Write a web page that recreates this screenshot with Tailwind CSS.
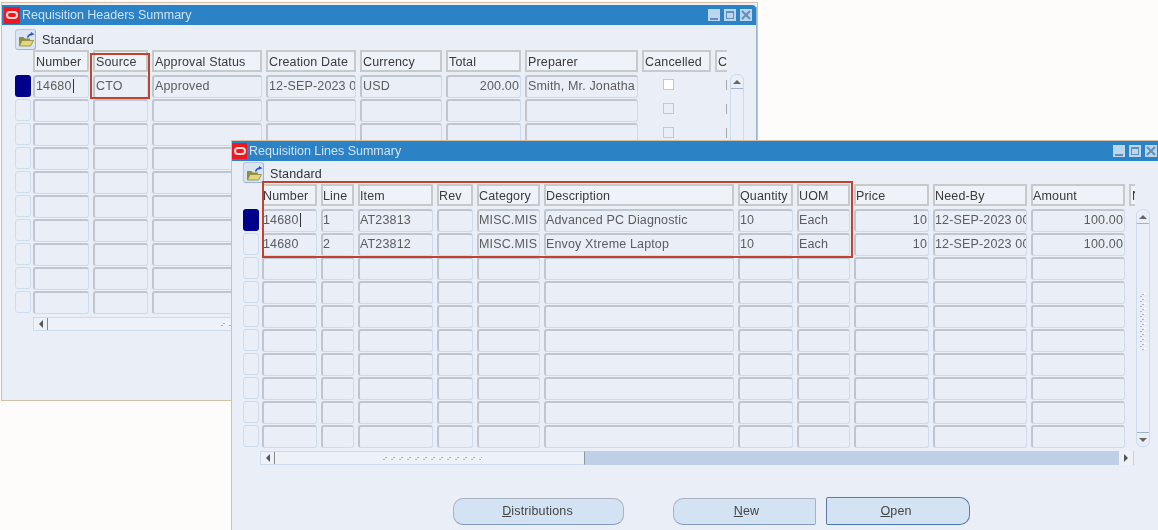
<!DOCTYPE html>
<html lang="en">
<head>
<meta charset="UTF-8" />
<title>Requisition Summary</title>
<script src="https://cdn.jsdelivr.net/npm/@tailwindcss/browser@4"></script>
</head>
<body class="bg-[#fdfcfa] h-[530px] w-[1158px] overflow-hidden relative font-['Liberation_Sans',Arial,sans-serif] text-[12.5px] tracking-[0.15px]">

<svg width="0" height="0" class="absolute">
  <defs>
    <pattern id="grip" width="8" height="5" patternUnits="userSpaceOnUse">
      <rect x="5" y="0" width="2" height="1" fill="#fff"/>
      <rect x="3" y="1" width="2" height="1" fill="#a9b5c7"/>
      <rect x="1" y="3" width="2" height="1" fill="#a9b5c7"/>
    </pattern>
    <g id="folder">
      <path d="M2 6h4.500l1 1.500h5.500v2H5.500L3 14.500H2z" fill="#8f8e40"/>
      <path d="M5 9.500h11.500l-3 5.500H2.500z" fill="#e2d77c" stroke="#8a8838" stroke-width="0.800"/>
      <path d="M10.500 6.500c1-2.500 2.500-3.500 4.500-3.200" fill="none" stroke="#2a52d0" stroke-width="1.400"/>
      <path d="M14 1l3.500 2.200-4 1.500z" fill="#2a52d0"/>
    </g>
  </defs>
</svg>

<!-- headers window -->
<section class="absolute left-[1px] top-[2px] w-[757px] h-[399px] bg-[#e9eef7] border border-[#d4bfa9] flex flex-col blur-[0.25px]">
  <div class="absolute right-0 top-[4px] bottom-0 w-[1px] bg-[#9db3d0]"></div>
  <div class="h-[20px] mt-[2px] mr-[1px] bg-[#2b83c5] flex items-center text-[#cfe2f2] tracking-normal shrink-0 rounded-tr-[4px]">
    <span class="w-[16px] h-[17px] ml-[2px] mr-[2px] bg-[#f01820] flex items-center justify-center"><span class="block w-[12px] h-[8px] border-2 border-[#ffd9d9] rounded-[4px]"></span></span>
    <span class="mt-[1px]">Requisition Headers Summary</span>
    <div class="ml-auto mr-[4px] flex gap-[4px]">
      <span class="w-[12px] h-[12px] bg-[#bcd6ec] flex items-end justify-center pb-[1px]"><span class="block w-[8px] h-[2px] bg-[#5f8fbc]"></span></span>
      <span class="w-[12px] h-[12px] bg-[#bcd6ec] flex items-center justify-center"><span class="block w-[8px] h-[8px] border border-t-2 border-[#5f8fbc]"></span></span>
      <span class="w-[12px] h-[12px] bg-[#bcd6ec] flex items-center justify-center text-[#5f8fbc]"><svg width="10" height="10" viewBox="0 0 10 10"><path d="M1 1l8 8M9 1l-8 8" stroke="currentColor" stroke-width="2"/></svg></span>
    </div>
  </div>
  <div class="h-[25px] pl-[13px] flex items-center gap-[6px] text-[#333] shrink-0">
    <span class="w-[21px] h-[21px] mt-[3px] bg-[#dbe5f2] border border-[#b6c8e0] border-r-[#9db3d0] border-b-[#9db3d0] rounded-[3px] flex items-center justify-center"><svg width="18" height="16" viewBox="0 0 18 16"><use href="#folder"/></svg></span>
    <span class="mt-[5px]">Standard</span>
  </div>
  <div class="flex pl-[13px]">
    <div id="hdr-grid" class="grid grid-cols-[18px_60px_59px_114px_94px_86px_79px_117px_73px_12px]"></div>
    <div class="ml-[3px] mt-[24px] w-[14px] h-[240px] border border-[#cddbee] rounded-t-[6px] flex flex-col items-center">
      <span class="w-full h-[14px] border-b border-[#9fb2cb] flex items-center justify-center"><span class="w-0 h-0 border-x-[4px] border-x-transparent border-b-[4px] border-b-[#666]"></span></span>
    </div>
  </div>
  <div class="ml-[31px] mt-[2px] w-[220px] h-[14px] bg-[#edf1f8] border border-[#cddbee] flex items-center">
    <span class="w-[14px] h-full border-r border-[#888] flex items-center justify-center"><span class="w-0 h-0 border-y-[4px] border-y-transparent border-r-[4px] border-r-[#555]"></span></span>
    <svg class="ml-auto" width="32" height="5"><rect width="32" height="5" fill="url(#grip)"/></svg>
  </div>
</section>

<!-- lines window -->
<section class="absolute left-[231px] top-[140px] w-[927px] h-[390px] bg-[#e9eef7] border-l border-t border-[#d4bfa9] flex flex-col blur-[0.25px]">
  <div class="h-[20px] bg-[#2b83c5] flex items-center text-[#cfe2f2] tracking-normal shrink-0">
    <span class="w-[15px] h-[16px] mr-[2px] bg-[#f01820] flex items-center justify-center"><span class="block w-[12px] h-[8px] border-2 border-[#ffd9d9] rounded-[4px]"></span></span>
    <span>Requisition Lines Summary</span>
    <div class="ml-auto mr-[1px] flex gap-[4px]">
      <span class="w-[12px] h-[12px] bg-[#bcd6ec] flex items-end justify-center pb-[1px]"><span class="block w-[8px] h-[2px] bg-[#5f8fbc]"></span></span>
      <span class="w-[12px] h-[12px] bg-[#bcd6ec] flex items-center justify-center"><span class="block w-[8px] h-[8px] border border-t-2 border-[#5f8fbc]"></span></span>
      <span class="w-[12px] h-[12px] bg-[#bcd6ec] flex items-center justify-center text-[#5f8fbc]"><svg width="10" height="10" viewBox="0 0 10 10"><path d="M1 1l8 8M9 1l-8 8" stroke="currentColor" stroke-width="2"/></svg></span>
    </div>
  </div>
  <div class="h-[23px] pl-[11px] flex items-center gap-[6px] text-[#333] shrink-0">
    <span class="w-[21px] h-[21px] bg-[#dbe5f2] border border-[#b6c8e0] border-r-[#9db3d0] border-b-[#9db3d0] rounded-[3px] flex items-center justify-center"><svg width="18" height="16" viewBox="0 0 18 16"><use href="#folder"/></svg></span>
    <span class="mt-[3px]">Standard</span>
  </div>
  <div class="flex pl-[11px]">
    <div id="line-grid" class="grid grid-cols-[19px_59px_37px_79px_40px_67px_194px_59px_57px_79px_98px_98px_6px]"></div>
    <div class="ml-[1px] mt-[25px] w-[14px] h-[238px] border border-[#cddbee] rounded-[6px] flex flex-col items-center">
      <span class="w-full h-[14px] border-b border-[#9fb2cb] flex items-center justify-center shrink-0"><span class="w-0 h-0 border-x-[4px] border-x-transparent border-b-[4px] border-b-[#666]"></span></span>
      <svg class="mt-[69px]" width="8" height="58"><rect width="8" height="58" fill="url(#grip)"/></svg>
      <span class="mt-auto w-full h-[14px] border-t border-[#9fb2cb] flex items-center justify-center shrink-0"><span class="w-0 h-0 border-x-[4px] border-x-transparent border-t-[4px] border-t-[#666]"></span></span>
    </div>
  </div>
  <div class="ml-[28px] mt-[2px] w-[874px] h-[14px] bg-[#bfcfe5] flex items-stretch">
    <div class="w-[325px] bg-[#edf1f8] border border-[#cddbee] border-r-[#8b95a3] flex items-center">
      <span class="w-[14px] h-full border-r border-[#888] flex items-center justify-center"><span class="w-0 h-0 border-y-[4px] border-y-transparent border-r-[4px] border-r-[#555]"></span></span>
      <svg class="ml-[107px]" width="100" height="5"><rect width="100" height="5" fill="url(#grip)"/></svg>
    </div>
    <span class="ml-auto mr-[1px] w-[14px] bg-[#edf1f8] flex items-center justify-center"><span class="w-0 h-0 border-y-[4px] border-y-transparent border-l-[4px] border-l-[#555]"></span></span>
  </div>
  <div class="flex items-center pl-[221px] mt-[32px] text-[#444]">
    <button class="w-[171px] h-[27px] bg-[#d3e3f4] border border-[#aab2bd] border-b-[#7f9cc0] rounded-[10px] pr-[2px]"><u>D</u>istributions</button>
    <button class="ml-[49px] w-[143px] h-[27px] bg-[#d3e3f4] border border-[#aab2bd] border-b-[#7f9cc0] rounded-l-[10px] rounded-r-[2px] pl-[4px]"><u>N</u>ew</button>
    <button class="ml-[10px] w-[144px] h-[28px] bg-[#d3e3f4] border-[1.5px] border-[#5f7aa0] border-b-[#4a76ad] rounded-l-[2px] rounded-r-[10px] pr-[4px]"><u>O</u>pen</button>
  </div>
</section>

<!-- red highlights -->
<div class="absolute left-[90px] top-[53px] w-[60px] h-[46px] border-2 border-[#c0432f]"></div>
<div class="absolute left-[262px] top-[181px] w-[591px] h-[77px] border-2 border-[#c0432f]"></div>

<script>
  const headCell = "h-[22px] mr-[4px] mb-[3px] border-2 border-[#c8caca] bg-[#eef2f9] px-[1px] leading-[20px] text-[#3a3a3a] overflow-hidden whitespace-nowrap";
  const fieldCell = "h-[23px] mr-[4px] mb-[1px] border-t-2 border-l-2 border-r border-b border-t-[#c0c6d0] border-l-[#c0c6d0] border-r-[#cddbee] border-b-[#cddbee] rounded-[3px] px-[1px] leading-[18px] text-[#5c5c5c] overflow-hidden whitespace-nowrap";
  const fieldRight = "h-[23px] mr-[4px] mb-[1px] border-t-2 border-l-2 border-r border-b border-t-[#c0c6d0] border-l-[#c0c6d0] border-r-[#cddbee] border-b-[#cddbee] rounded-[3px] px-[1px] leading-[18px] text-[#5c5c5c] overflow-hidden whitespace-nowrap text-right";
  const clipHead = "h-[22px] mb-[3px] border-2 border-r-0 border-[#c8caca] bg-[#eef2f9] px-[1px] leading-[20px] text-[#3a3a3a] overflow-hidden whitespace-nowrap";
  const selOn = "h-[22px] w-[16px] mb-[2px] bg-[#00008b] rounded-[3px]";
  const selOff = "h-[22px] w-[16px] mb-[2px] border border-[#cddbee] rounded-[3px]";

  function add(grid, cls, text) {
    const d = document.createElement("div");
    d.className = cls;
    if (text) d.textContent = text;
    grid.appendChild(d);
    return d;
  }

  function caret(cell) {
    cell.innerHTML = '<span class="border-r border-[#333] pr-[1px]">' + cell.textContent + '</span>';
  }

  // headers block
  const hdr = document.getElementById("hdr-grid");
  const hdrCols = ["Number","Source","Approval Status","Creation Date","Currency","Total","Preparer","Cancelled","C"];
  add(hdr, "");
  hdrCols.forEach((c, i) => add(hdr, i === 8 ? clipHead : headCell, c));
  const hdrRow = ["14680","CTO","Approved","12-SEP-2023 0","USD","200.00","Smith, Mr. Jonatha"];
  for (let r = 0; r < 10; r++) {
    add(hdr, r === 0 ? selOn : selOff);
    for (let c = 0; c < 7; c++) {
      const cell = add(hdr, c === 5 ? fieldRight : fieldCell, r === 0 ? hdrRow[c] : "");
      if (r === 0 && c === 0) caret(cell);
    }
    const box = add(hdr, "h-[24px] flex items-start justify-center pr-[20px] pt-[4px]");
    box.innerHTML = r === 0
      ? '<span class="block w-[11px] h-[11px] bg-white border border-[#c8c8c8]"></span>'
      : '<span class="block w-[11px] h-[11px] border border-[#c8c8c8]"></span>';
    const bar = add(hdr, "h-[24px] flex items-start justify-end pt-[5px]");
    bar.innerHTML = '<span class="block w-[1px] h-[10px] bg-[#aaa]"></span>';
  }

  // lines block, its text sits a pixel further left than in the headers block
  const lines = document.getElementById("line-grid");
  const lineCols = ["Number","Line","Item","Rev","Category","Description","Quantity","UOM","Price","Need-By","Amount","N"];
  const rightCols = [8, 10];
  const lineRows = [
    ["14680","1","AT23813","","MISC.MIS","Advanced PC Diagnostic","10","Each","10","12-SEP-2023 00","100.00"],
    ["14680","2","AT23812","","MISC.MIS","Envoy Xtreme Laptop","10","Each","10","12-SEP-2023 00","100.00"]
  ];
  add(lines, "");
  lineCols.forEach((c, i) => {
    const cls = i === 11 ? clipHead : i === 0 ? headCell + " indent-[-2px]" : headCell + " indent-[-1px]";
    add(lines, cls, c);
  });
  for (let r = 0; r < 10; r++) {
    add(lines, r === 0 ? selOn : selOff);
    for (let c = 0; c < 11; c++) {
      const text = lineRows[r] ? lineRows[r][c] : "";
      const cls = rightCols.includes(c) ? fieldRight : c === 0 ? fieldCell + " indent-[-2px]" : fieldCell + " indent-[-1px]";
      const cell = add(lines, cls, text);
      if (r === 0 && c === 0) caret(cell);
    }
    add(lines, "h-[24px]");
  }
</script>
</body>
</html>
